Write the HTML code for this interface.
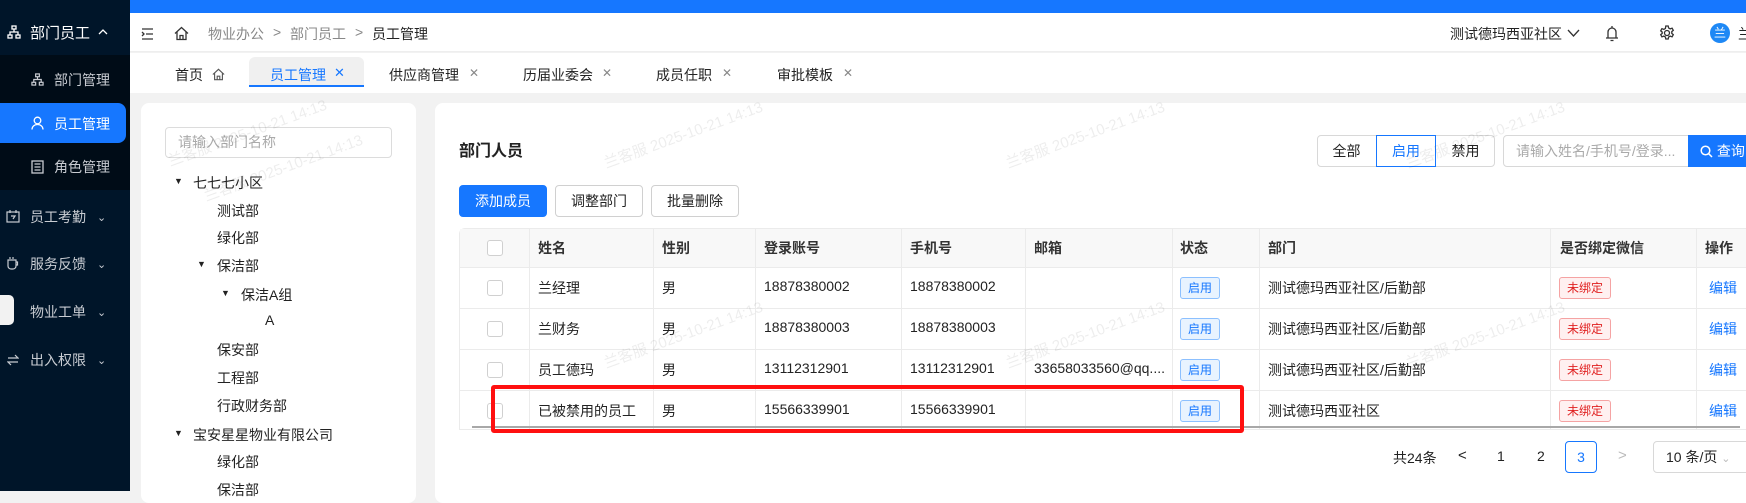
<!DOCTYPE html>
<html><head><meta charset="utf-8"><style>
*{box-sizing:border-box;margin:0;padding:0}
body{width:1746px;height:491px;overflow:hidden;position:relative;background:#f2f2f2;font-family:"Liberation Sans","Noto Sans CJK SC",sans-serif;font-size:14px;color:#222}
.a{position:absolute;white-space:nowrap}
.side{left:0;top:0;width:130px;height:491px;background:#001529}
.sub{left:0;top:55px;width:130px;height:135px;background:#000c17}
.st{color:#c8ccd2;font-size:14px;line-height:20px}
.wm{color:rgba(0,0,0,0.07);font-size:15px;transform:rotate(-20deg);transform-origin:left bottom}
.th{font-weight:bold;color:#333}
.cb{width:16px;height:16px;border:1px solid #d0d0d0;border-radius:3px;background:#fff}
.tagb{border:1px solid #8cc0ff;background:#e8f3ff;color:#1677ff;font-size:12px;border-radius:3px;width:40px;height:22px;line-height:20px;text-align:center}
.tagr{border:1px solid #f5a3a3;background:#fff0f0;color:#e02020;font-size:12px;border-radius:3px;width:52px;height:22px;line-height:20px;text-align:center}
.vl{width:1px;background:#ebebeb}
.hl{height:1px;background:#ebebeb}
.btn{height:32px;border:1px solid #d0d0d0;border-radius:4px;background:#fff;text-align:center;line-height:30px;color:#222}
</style></head><body>
<!-- sidebar -->
<div class="a side"></div>
<div class="a sub"></div>
<div class="a" style="left:0;top:103px;width:126px;height:40px;background:#1677ff;border-radius:0 8px 8px 0"></div>
<svg class="a" style="left:7px;top:25px" width="14" height="14" viewBox="0 0 14 14" fill="none" stroke="#fff" stroke-width="1.3"><rect x="5" y="1" width="4" height="3"/><rect x="1" y="10" width="4" height="3"/><rect x="9" y="10" width="4" height="3"/><path d="M7 4v3M3 10V7h8v3"/></svg>
<div class="a" style="left:30px;top:22px;color:#fff;font-size:15px">部门员工</div>
<svg class="a" style="left:98px;top:28px" width="10" height="8" viewBox="0 0 10 8" fill="none" stroke="#fff" stroke-width="1.3"><path d="M1 6l4-4 4 4"/></svg>
<svg class="a" style="left:31px;top:73px" width="13" height="13" viewBox="0 0 14 14" fill="none" stroke="#c8ccd2" stroke-width="1.3"><rect x="5" y="1" width="4" height="3"/><rect x="1" y="10" width="4" height="3"/><rect x="9" y="10" width="4" height="3"/><path d="M7 4v3M3 10V7h8v3"/></svg>
<div class="a st" style="left:54px;top:70px">部门管理</div>
<svg class="a" style="left:31px;top:116px" width="13" height="14" viewBox="0 0 13 14" fill="none" stroke="#fff" stroke-width="1.3"><circle cx="6.5" cy="4.5" r="3.3"/><path d="M1 13.5c0-3 2.5-5 5.5-5s5.5 2 5.5 5"/></svg>
<div class="a" style="left:54px;top:114px;color:#fff;font-size:14px;line-height:20px">员工管理</div>
<svg class="a" style="left:31px;top:160px" width="13" height="14" viewBox="0 0 13 14" fill="none" stroke="#c8ccd2" stroke-width="1.3"><rect x="1" y="1" width="11" height="12"/><path d="M3.5 4h6M3.5 7h6M3.5 10h6"/></svg>
<div class="a st" style="left:54px;top:157px">角色管理</div>
<svg class="a" style="left:6px;top:210px" width="14" height="13" viewBox="0 0 14 13" fill="none" stroke="#c8ccd2" stroke-width="1.2"><rect x="1" y="2" width="12" height="10"/><path d="M4 0v3M10 0v3M5 6h4l-2 3"/></svg>
<div class="a st" style="left:30px;top:207px">员工考勤</div>
<div class="a st" style="left:30px;top:254px">服务反馈</div>
<div class="a st" style="left:30px;top:302px">物业工单</div>
<div class="a st" style="left:30px;top:350px">出入权限</div>
<svg class="a" style="left:7px;top:256px" width="12" height="14" viewBox="0 0 12 14" fill="none" stroke="#c8ccd2" stroke-width="1.2"><path d="M3 1v2M6 1v2M1 4h8v6a3 3 0 0 1-3 3H4a3 3 0 0 1-3-3z M9 6h1.5v3H9"/></svg>
<svg class="a" style="left:7px;top:354px" width="12" height="12" viewBox="0 0 12 12" fill="none" stroke="#c8ccd2" stroke-width="1.2"><path d="M1 4h10L8 1M11 8H1l3 3"/></svg>
<div class="a st" style="left:97px;top:208px;font-size:11px">&#8964;</div>
<div class="a st" style="left:97px;top:255px;font-size:11px">&#8964;</div>
<div class="a st" style="left:97px;top:303px;font-size:11px">&#8964;</div>
<div class="a st" style="left:97px;top:351px;font-size:11px">&#8964;</div>
<div class="a" style="left:0;top:295px;width:14px;height:30px;background:#f2f2f2;border-radius:0 5px 5px 0"></div>
<!-- header -->
<div class="a" style="left:130px;top:0;width:1616px;height:13px;background:#1677ff"></div>
<div class="a" style="left:130px;top:13px;width:1616px;height:39px;background:#fff;border-bottom:1px solid #eee"></div>
<svg class="a" style="left:141px;top:28px" width="13" height="12" viewBox="0 0 13 12" fill="none" stroke="#333" stroke-width="1.3"><path d="M1 1h11M5 6h7M1 11h11M1 4l2 2-2 2"/></svg>
<svg class="a" style="left:174px;top:26px" width="15" height="15" viewBox="0 0 15 15" fill="none" stroke="#333" stroke-width="1.3"><path d="M1 7.5L7.5 1.5 14 7.5M3 6v7.5h9V6M6 13.5v-4h3v4"/></svg>
<div class="a" style="left:208px;top:24px;color:#888">物业办公</div>
<div class="a" style="left:273px;top:24px;color:#888">&gt;</div>
<div class="a" style="left:290px;top:24px;color:#888">部门员工</div>
<div class="a" style="left:355px;top:24px;color:#888">&gt;</div>
<div class="a" style="left:372px;top:24px;color:#222">员工管理</div>
<div class="a" style="left:1450px;top:24px;color:#222">测试德玛西亚社区</div>
<svg class="a" style="left:1567px;top:29px" width="13" height="8" viewBox="0 0 13 8" fill="none" stroke="#333" stroke-width="1.3"><path d="M1 1l5.5 6L12 1"/></svg>
<svg class="a" style="left:1605px;top:25px" width="14" height="17" viewBox="0 0 14 17" fill="none" stroke="#333" stroke-width="1.3"><path d="M7 1v1.5M3 13V7a4 4 0 0 1 8 0v6h2H1M5.5 15.5h3"/></svg>
<svg class="a" style="left:1659px;top:25px" width="16" height="16" viewBox="0 0 16 16" fill="none" stroke="#333" stroke-width="1.3"><circle cx="8" cy="8" r="2.5"/><path d="M6.8 1h2.4l.4 2 1.6.9 1.9-.7 1.2 2.1-1.5 1.3v1.8l1.5 1.3-1.2 2.1-1.9-.7-1.6.9-.4 2H6.8l-.4-2-1.6-.9-1.9.7-1.2-2.1 1.5-1.3V7.1L1.7 5.8l1.2-2.1 1.9.7 1.6-.9z"/></svg>
<div class="a" style="left:1710px;top:23px;width:20px;height:20px;border-radius:50%;background:#1e88f5;color:#fff;font-size:12px;text-align:center;line-height:20px">兰</div>
<div class="a" style="left:1738px;top:24px">兰</div>
<!-- tabs -->
<div class="a" style="left:130px;top:53px;width:1616px;height:40px;background:#fff"></div>
<div class="a" style="left:175px;top:65px">首页</div>
<svg class="a" style="left:212px;top:68px" width="13" height="13" viewBox="0 0 15 15" fill="none" stroke="#555" stroke-width="1.3"><path d="M1 7.5L7.5 1.5 14 7.5M3 6v7.5h9V6M6 13.5v-4h3v4"/></svg>
<div class="a" style="left:249px;top:57px;width:115px;height:30px;background:#f0f0f0;border-radius:6px 6px 0 0;border-bottom:2px solid #1677ff"></div>
<div class="a" style="left:270px;top:65px;color:#1677ff">员工管理</div>
<div class="a" style="left:334px;top:65px;color:#1677ff;font-size:13px">✕</div>
<div class="a" style="left:389px;top:65px">供应商管理</div><div class="a" style="left:469px;top:66px;color:#888;font-size:12px">✕</div>
<div class="a" style="left:523px;top:65px">历届业委会</div><div class="a" style="left:602px;top:66px;color:#888;font-size:12px">✕</div>
<div class="a" style="left:656px;top:65px">成员任职</div><div class="a" style="left:722px;top:66px;color:#888;font-size:12px">✕</div>
<div class="a" style="left:777px;top:65px">审批模板</div><div class="a" style="left:843px;top:66px;color:#888;font-size:12px">✕</div>
<!-- left card -->
<div class="a" style="left:141px;top:103px;width:275px;height:400px;background:#fff;border-radius:8px"></div>
<div class="a" style="left:165px;top:127px;width:227px;height:31px;border:1px solid #dcdcdc;border-radius:4px;color:#aaa;padding-left:12px;line-height:29px">请输入部门名称</div>
<div class="a" style="left:174px;top:176px;font-size:9px">▼</div><div class="a" style="left:193px;top:173px">七七七小区</div>
<div class="a" style="left:217px;top:201px">测试部</div>
<div class="a" style="left:217px;top:228px">绿化部</div>
<div class="a" style="left:197px;top:259px;font-size:9px">▼</div><div class="a" style="left:217px;top:256px">保洁部</div>
<div class="a" style="left:221px;top:288px;font-size:9px">▼</div><div class="a" style="left:241px;top:285px">保洁A组</div>
<div class="a" style="left:265px;top:312px">A</div>
<div class="a" style="left:217px;top:340px">保安部</div>
<div class="a" style="left:217px;top:368px">工程部</div>
<div class="a" style="left:217px;top:396px">行政财务部</div>
<div class="a" style="left:174px;top:428px;font-size:9px">▼</div><div class="a" style="left:193px;top:425px">宝安星星物业有限公司</div>
<div class="a" style="left:217px;top:452px">绿化部</div>
<div class="a" style="left:217px;top:480px">保洁部</div>
<!-- right card -->
<div class="a" style="left:435px;top:103px;width:1320px;height:400px;background:#fff;border-radius:8px"></div>
<div class="a" style="left:459px;top:137px;font-size:16px;font-weight:bold">部门人员</div>
<div class="a btn" style="left:1317px;top:135px;width:178px;border-color:#d8d8d8"></div>
<div class="a" style="left:1376px;top:135px;width:60px;height:32px;border:1px solid #1677ff;color:#1677ff;text-align:center;line-height:30px">启用</div>
<div class="a" style="left:1317px;top:141px;width:59px;text-align:center">全部</div>
<div class="a" style="left:1436px;top:141px;width:59px;text-align:center">禁用</div>
<div class="a" style="left:1503px;top:135px;width:186px;height:32px;border:1px solid #d8d8d8;border-radius:4px 0 0 4px;color:#aaa;padding-left:12px;line-height:30px">请输入姓名/手机号/登录...</div>
<div class="a" style="left:1688px;top:135px;width:70px;height:32px;background:#1677ff;color:#fff;line-height:32px;padding-left:12px">
<svg width="13" height="13" viewBox="0 0 13 13" fill="none" stroke="#fff" stroke-width="1.5" style="vertical-align:-2px"><circle cx="5.5" cy="5.5" r="4.3"/><path d="M8.7 8.7L12 12"/></svg> 查询</div>
<div class="a btn" style="left:459px;top:185px;width:88px;background:#1677ff;border-color:#1677ff;color:#fff">添加成员</div>
<div class="a btn" style="left:555px;top:185px;width:88px">调整部门</div>
<div class="a btn" style="left:651px;top:185px;width:88px">批量删除</div>
<!-- table -->
<div class="a" style="left:459px;top:228px;width:1290px;height:202px;border:1px solid #ebebeb;border-radius:6px 0 0 0"></div>
<div class="a" style="left:460px;top:229px;width:1290px;height:38px;background:#f8f8f8"></div>
<div class="a hl" style="left:460px;top:267px;width:1290px"></div>
<div class="a hl" style="left:460px;top:308px;width:1290px"></div>
<div class="a hl" style="left:460px;top:349px;width:1290px"></div>
<div class="a hl" style="left:460px;top:390px;width:1290px"></div>
<div class="a vl" style="left:529px;top:228px;height:202px"></div>
<div class="a vl" style="left:653px;top:228px;height:202px"></div>
<div class="a vl" style="left:755px;top:228px;height:202px"></div>
<div class="a vl" style="left:901px;top:228px;height:202px"></div>
<div class="a vl" style="left:1025px;top:228px;height:202px"></div>
<div class="a vl" style="left:1172px;top:228px;height:202px"></div>
<div class="a vl" style="left:1259px;top:228px;height:202px"></div>
<div class="a vl" style="left:1550px;top:228px;height:202px"></div>
<div class="a vl" style="left:1696px;top:228px;height:202px"></div>
<div class="a cb" style="left:487px;top:240px"></div>
<div class="a cb" style="left:487px;top:280px"></div>
<div class="a cb" style="left:487px;top:321px"></div>
<div class="a cb" style="left:487px;top:362px"></div>
<div class="a cb" style="left:487px;top:403px"></div>
<div class="a th" style="left:538px;top:238px">姓名</div>
<div class="a th" style="left:662px;top:238px">性别</div>
<div class="a th" style="left:764px;top:238px">登录账号</div>
<div class="a th" style="left:910px;top:238px">手机号</div>
<div class="a th" style="left:1034px;top:238px">邮箱</div>
<div class="a th" style="left:1180px;top:238px">状态</div>
<div class="a th" style="left:1268px;top:238px">部门</div>
<div class="a th" style="left:1560px;top:238px">是否绑定微信</div>
<div class="a th" style="left:1705px;top:238px">操作</div>
<!-- rows -->
<div class="a" style="left:538px;top:278px">兰经理</div><div class="a" style="left:662px;top:278px">男</div><div class="a" style="left:764px;top:278px">18878380002</div><div class="a" style="left:910px;top:278px">18878380002</div>
<div class="a" style="left:538px;top:319px">兰财务</div><div class="a" style="left:662px;top:319px">男</div><div class="a" style="left:764px;top:319px">18878380003</div><div class="a" style="left:910px;top:319px">18878380003</div>
<div class="a" style="left:538px;top:360px">员工德玛</div><div class="a" style="left:662px;top:360px">男</div><div class="a" style="left:764px;top:360px">13112312901</div><div class="a" style="left:910px;top:360px">13112312901</div><div class="a" style="left:1034px;top:360px">33658033560@qq....</div>
<div class="a" style="left:538px;top:401px">已被禁用的员工</div><div class="a" style="left:662px;top:401px">男</div><div class="a" style="left:764px;top:401px">15566339901</div><div class="a" style="left:910px;top:401px">15566339901</div>
<div class="a tagb" style="left:1180px;top:277px">启用</div>
<div class="a tagb" style="left:1180px;top:318px">启用</div>
<div class="a tagb" style="left:1180px;top:359px">启用</div>
<div class="a tagb" style="left:1180px;top:400px">启用</div>
<div class="a" style="left:1268px;top:278px">测试德玛西亚社区/后勤部</div>
<div class="a" style="left:1268px;top:319px">测试德玛西亚社区/后勤部</div>
<div class="a" style="left:1268px;top:360px">测试德玛西亚社区/后勤部</div>
<div class="a" style="left:1268px;top:401px">测试德玛西亚社区</div>
<div class="a tagr" style="left:1559px;top:277px">未绑定</div>
<div class="a tagr" style="left:1559px;top:318px">未绑定</div>
<div class="a tagr" style="left:1559px;top:359px">未绑定</div>
<div class="a tagr" style="left:1559px;top:400px">未绑定</div>
<div class="a" style="left:1709px;top:278px;color:#1677ff">编辑</div>
<div class="a" style="left:1709px;top:319px;color:#1677ff">编辑</div>
<div class="a" style="left:1709px;top:360px;color:#1677ff">编辑</div>
<div class="a" style="left:1709px;top:401px;color:#1677ff">编辑</div>
<div class="a" style="left:472px;top:426px;width:1268px;height:2px;background:#a8a8a8"></div>
<div class="a" style="left:491px;top:385px;width:753px;height:48px;border:4px solid #ff1010;border-radius:3px"></div>
<!-- pagination -->
<div class="a" style="left:1393px;top:448px">共24条</div>
<div class="a" style="left:1458px;top:447px;font-size:15px">&lt;</div>
<div class="a" style="left:1497px;top:448px">1</div>
<div class="a" style="left:1537px;top:448px">2</div>
<div class="a" style="left:1565px;top:441px;width:32px;height:32px;border:1px solid #1677ff;border-radius:4px;color:#1677ff;text-align:center;line-height:30px">3</div>
<div class="a" style="left:1618px;top:447px;color:#bbb;font-size:15px">&gt;</div>
<div class="a" style="left:1653px;top:441px;width:100px;height:32px;border:1px solid #d8d8d8;border-radius:4px;padding-left:12px;line-height:30px">10 条/页 <span style="color:#bbb;font-size:11px">&#8964;</span></div>
<!-- watermarks -->
<div class="a wm" style="left:172px;top:150px">兰客服 2025-10-21 14:13</div>
<div class="a wm" style="left:208px;top:185px">兰客服 2025-10-21 14:13</div>
<div class="a wm" style="left:608px;top:152px">兰客服 2025-10-21 14:13</div>
<div class="a wm" style="left:608px;top:352px">兰客服 2025-10-21 14:13</div>
<div class="a wm" style="left:1010px;top:152px">兰客服 2025-10-21 14:13</div>
<div class="a wm" style="left:1010px;top:352px">兰客服 2025-10-21 14:13</div>
<div class="a wm" style="left:1410px;top:152px">兰客服 2025-10-21 14:13</div>
<div class="a wm" style="left:1410px;top:352px">兰客服 2025-10-21 14:13</div>
</body></html>
